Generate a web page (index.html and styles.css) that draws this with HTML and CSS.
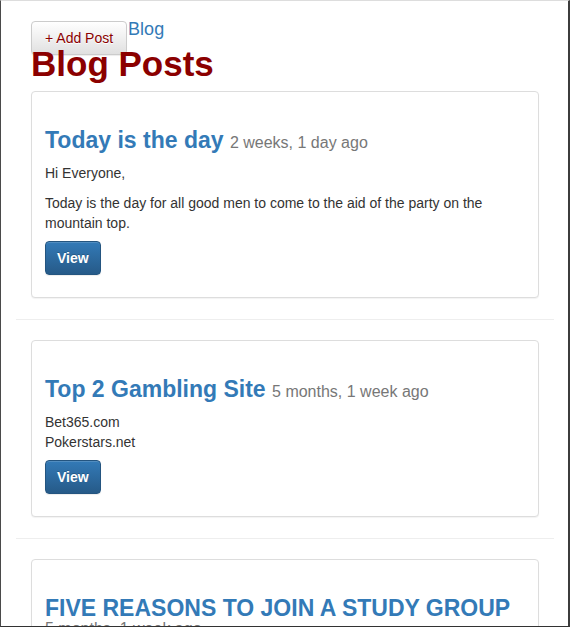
FILE: index.html
```html
<!DOCTYPE html>
<html lang="en">

<head>
    <meta charset="UTF-8">
    <meta name="viewport" content="width=device-width, initial-scale=1.0">
    <title>Blog Posts</title>
    <link rel="stylesheet" href="styles.css">
</head>

<body>
    <div class="window">
        <div class="page">

            <div class="topbar">
                <button class="btn btn-add">+ Add Post</button>
                <a href="#" class="brand">Blog</a>
            </div>

            <h1 class="page-title">Blog Posts</h1>

            <div class="post-item">
                <div class="card">
                    <h3 class="post-title">Today is the day <small>2 weeks, 1 day ago</small></h3>
                    <p>Hi Everyone,</p>
                    <p class="last">Today is the day for all good men to come to the aid of the party on the mountain top.</p>
                    <button class="btn btn-view">View</button>
                </div>
                <hr>
            </div>

            <div class="post-item">
                <div class="card">
                    <h3 class="post-title">Top 2 Gambling Site <small>5 months, 1 week ago</small></h3>
                    <p class="last">Bet365.com<br>Pokerstars.net</p>
                    <button class="btn btn-view">View</button>
                </div>
                <hr>
            </div>

            <div class="post-item">
                <div class="card">
                    <h3 class="post-title">FIVE REASONS TO JOIN A STUDY GROUP <small>5 months, 1 week ago</small></h3>
                    <p class="last">Study groups help you stay on track.</p>
                    <button class="btn btn-view">View</button>
                </div>
            </div>

        </div>
    </div>
</body>

</html>
```

FILE: styles.css
```css
html,
body {
    margin: 0;
    padding: 0;
    background: #fff;
}

body {
    font-family: "Liberation Sans", Arial, sans-serif;
    font-size: 14px;
    line-height: 20px;
    color: #333;
}

.window {
    box-sizing: border-box;
    width: 570px;
    height: 627px;
    overflow: hidden;
    border-top: 1px solid #ddd;
    border-left: 1px solid #4a4a4a;
    border-right: 2px solid #3c3c3c;
    border-bottom: 1px solid #333;
}

.page {
    padding: 20px 14px 0 15px;
}

.topbar {
    display: flex;
    align-items: flex-start;
    gap: 1px;
    height: 23px;
    padding: 0 15px;
}

.btn {
    font-family: inherit;
    font-size: 14px;
    line-height: 20px;
    padding: 6px 12px;
    border-radius: 4px;
    border: 1px solid transparent;
    cursor: pointer;
    flex-shrink: 0;
}

.btn-add {
    padding: 6px 13px;
    color: #8b0000;
    background: linear-gradient(to bottom, #fff 0, #e0e0e0 100%);
    border-color: #ccc;
    text-shadow: 0 1px 0 #fff;
    box-shadow: inset 0 1px 0 rgba(255, 255, 255, 0.15), 0 1px 1px rgba(0, 0, 0, 0.075);
}

.brand {
    margin-top: -2px;
    font-size: 18px;
    line-height: 20px;
    color: #337ab7;
    text-decoration: none;
}

.page-title {
    margin: 1px 0 8px;
    padding: 0 15px;
    font-size: 35px;
    line-height: 38px;
    font-weight: bold;
    color: #8b0000;
}

.card {
    margin: 0 15px;
    padding: 15px 13px;
    border: 1px solid #ddd;
    border-radius: 4px;
    box-shadow: 0 1px 1px rgba(0, 0, 0, 0.05);
    background: #fff;
}

.post-title {
    margin: 24px 0 14px;
    font-size: 23px;
    line-height: 18px;
    font-weight: bold;
    color: #337ab7;
}

.post-title small {
    font-size: 16px;
    line-height: 12px;
    font-weight: normal;
    color: #777;
}

.card p {
    margin: 0 0 10px;
}

.card p.last {
    margin-bottom: 8px;
}

.btn-view {
    display: block;
    margin-bottom: 7px;
    padding: 6px 11px;
    font-weight: bold;
    color: #fff;
    background: linear-gradient(to bottom, #337ab7 0, #265a88 100%);
    border-color: #245580;
    text-shadow: 0 -1px 0 rgba(0, 0, 0, 0.2);
    box-shadow: inset 0 1px 0 rgba(255, 255, 255, 0.15), 0 1px 1px rgba(0, 0, 0, 0.075);
}

hr {
    margin: 21px 0 20px;
    border: 0;
    border-top: 1px solid #eee;
}
```
